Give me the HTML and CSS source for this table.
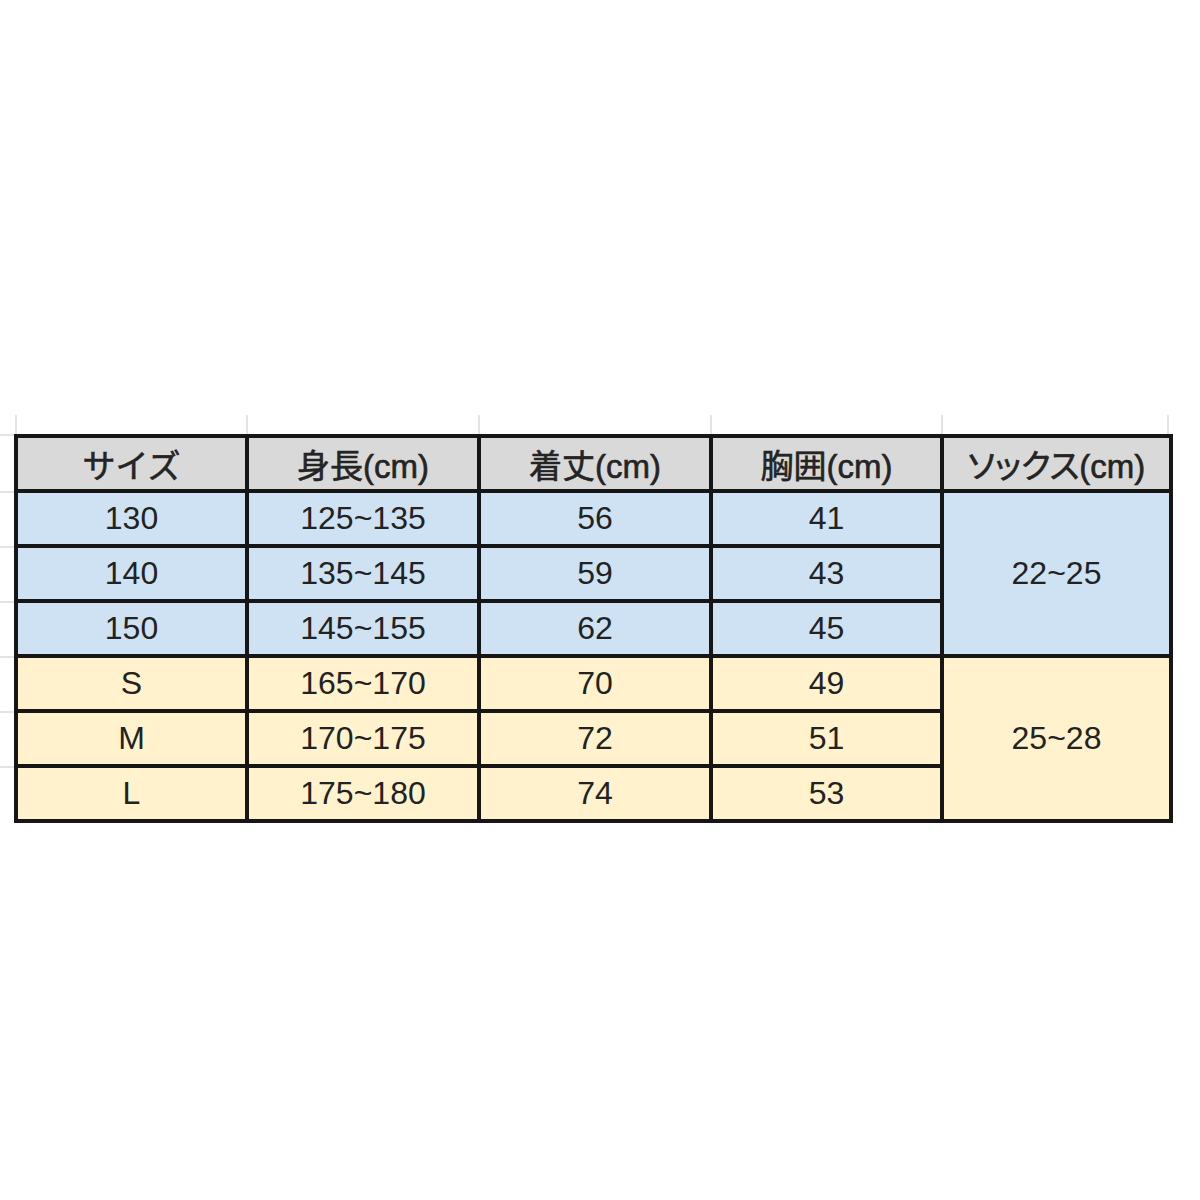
FILE: index.html
```html
<!DOCTYPE html>
<html lang="ja">
<head>
<meta charset="utf-8">
<title>サイズ表</title>
<link rel="stylesheet" href="styles.css">
</head>
<body>
<div class="sheet">
  <div class="ticks">
    <div class="tick t1"></div>
    <div class="tick t2"></div>
    <div class="tick t3"></div>
    <div class="tick t4"></div>
    <div class="tick t5"></div>
  </div>
  <div class="grid-row">
    <div class="rowhdr">
      <div class="rh"></div>
      <div class="rh"></div>
      <div class="rh"></div>
      <div class="rh"></div>
      <div class="rh"></div>
      <div class="rh"></div>
      <div class="rh last"></div>
    </div>
    <table class="size-table">
      <thead>
        <tr class="head">
          <th class="c1">サイズ</th>
          <th class="c2">身長(cm)</th>
          <th class="c3">着丈(cm)</th>
          <th class="c4">胸囲(cm)</th>
          <th class="c5"><span class="kana">ソックス</span>(cm)</th>
        </tr>
      </thead>
      <tbody>
        <tr class="kids">
          <td>130</td><td>125~135</td><td>56</td><td>41</td>
          <td class="socks" rowspan="3">22~25</td>
        </tr>
        <tr class="kids">
          <td>140</td><td>135~145</td><td>59</td><td>43</td>
        </tr>
        <tr class="kids">
          <td>150</td><td>145~155</td><td>62</td><td>45</td>
        </tr>
        <tr class="adult">
          <td>S</td><td>165~170</td><td>70</td><td>49</td>
          <td class="socks last" rowspan="3">25~28</td>
        </tr>
        <tr class="adult">
          <td>M</td><td>170~175</td><td>72</td><td>51</td>
        </tr>
        <tr class="adult final">
          <td>L</td><td>175~180</td><td>74</td><td>53</td>
        </tr>
      </tbody>
    </table>
  </div>
</div>
</body>
</html>
```

FILE: styles.css
```css
html, body {
  margin: 0;
  padding: 0;
  background: #ffffff;
}

.sheet {
  padding-top: 415px;
}

.ticks {
  display: flex;
  margin-left: 15px;
  height: 19px;
}

.tick {
  box-sizing: border-box;
  border-left: 2px solid #e4e4e4;
  height: 19px;
}

.t1 { width: 231px; }
.t2 { width: 232px; }
.t3 { width: 232px; }
.t4 { width: 231px; }
.t5 { width: 228px; border-right: 2px solid #e4e4e4; }

.grid-row {
  display: flex;
  align-items: flex-start;
}

.rowhdr {
  width: 14px;
  display: flex;
  flex-direction: column;
  border-top: 2px solid #e4e4e4;
  padding-top: 2px;
}

.rh {
  box-sizing: border-box;
  height: 55px;
  border-bottom: 2px solid #e4e4e4;
}

.rh.last {
  border-bottom: none;
}

.size-table {
  border-collapse: separate;
  border-spacing: 0;
  border: 4px solid #161616;
  table-layout: fixed;
  width: 1159px;
  font-family: "Liberation Sans", "Noto Sans CJK JP", Arial, sans-serif;
  font-size: 32px;
  color: #222222;
}

.size-table th,
.size-table td {
  box-sizing: border-box;
  height: 55px;
  padding: 0;
  text-align: center;
  vertical-align: middle;
  font-weight: normal;
  border-right: 4px solid #161616;
  border-bottom: 4px solid #161616;
  white-space: nowrap;
}

.size-table th {
  background: #d9d9d9;
  font-size: 33px;
  font-weight: 400;
  color: #242424;
  -webkit-text-stroke: 0.6px #242424;
}

.size-table th .kana {
  font-feature-settings: "palt" 1;
}

.size-table .c1 { width: 231px; }
.size-table .c2 { width: 232px; }
.size-table .c3 { width: 232px; }
.size-table .c4 { width: 231px; }
.size-table .c5 { width: 225px; }

.size-table th.c5,
.size-table td.socks {
  border-right: none;
}

.size-table td.socks.last,
.size-table tr.final td {
  border-bottom: none;
}

.size-table tr.final td {
  height: 51px;
}

.kids td {
  background: #cfe2f3;
}

.adult td {
  background: #fff2cc;
}
```
